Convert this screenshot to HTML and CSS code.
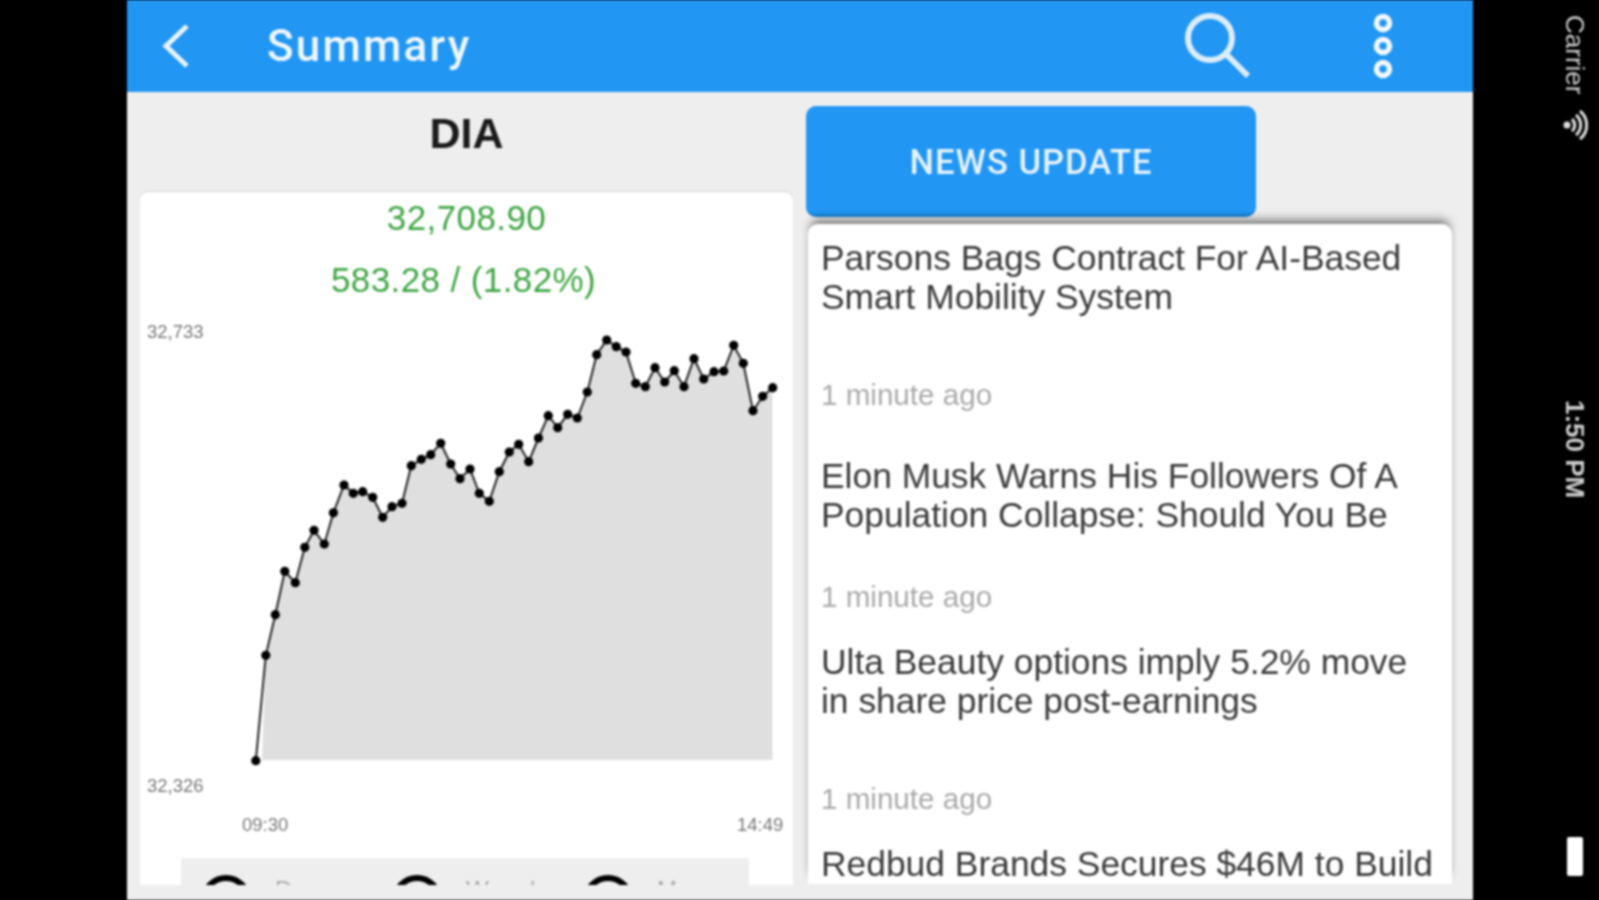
FILE: index.html
```html
<!DOCTYPE html>
<html lang="en">

<head>
  <meta charset="UTF-8" />
  <title>Summary</title>
  <meta name="viewport" content="width=device-width, initial-scale=1.0" />
  <link rel="stylesheet" href="styles.css">
</head>

<body>

  <div class="device">
    <div class="screen">

      <header class="topbar">
        <svg class="back-icon" viewBox="0 0 28 44" width="28" height="44">
          <path d="M25 2 L4 22 L25 42" fill="none" stroke="#e9f4fe" stroke-width="5" />
        </svg>
        <div class="topbar-title">Summary</div>
        <svg class="search-icon" viewBox="0 0 66 66" width="66" height="66">
          <circle cx="25" cy="25" r="22" fill="none" stroke="#dcedfc" stroke-width="6" />
          <path d="M41 41 L63 63" stroke="#dcedfc" stroke-width="6" />
        </svg>
        <svg class="more-icon" viewBox="0 0 20 66" width="20" height="66">
          <circle cx="10" cy="10" r="6.5" fill="none" stroke="#f2f8fe" stroke-width="5.5" />
          <circle cx="10" cy="33" r="6.5" fill="none" stroke="#f2f8fe" stroke-width="5.5" />
          <circle cx="10" cy="56" r="6.5" fill="none" stroke="#f2f8fe" stroke-width="5.5" />
        </svg>
      </header>

      <main class="content">

        <section class="quote-col">
          <h2 class="symbol">DIA</h2>
          <div class="quote-card">
            <p class="price">32,708.90</p>
            <p class="change">583.28 / (1.82%)</p>

            <svg class="chart" viewBox="142 320 649 538" width="649" height="538">
              <defs>
                <marker id="dot" markerUnits="userSpaceOnUse" markerWidth="10" markerHeight="10" refX="5" refY="5">
                  <circle cx="5" cy="5" r="4.6" fill="#000" />
                </marker>
              </defs>
              <polygon fill="#dfdfdf" points="262,760 265.8,655.3 275.3,614.7 284.8,571.3 295.3,582.7 304.8,547.3 314,530.3 324.3,544 333.4,512.8 344,485 353.3,493.3 362.7,491.7 372.7,497.3 382.7,517.3 392,506.7 402,503.3 411.3,465.7 421.3,459.3 430.7,454.7 440.7,443.3 450.7,464 460,478.7 470,469 479.3,493.3 489.3,501.3 499.3,471.7 509.3,452 518.7,444.3 528.7,461.7 538.5,438 548.3,415.7 557.7,427.7 567.7,414.3 577.3,418 587.3,392 596.7,354.7 606.7,340 616.3,346.7 626,352 635.7,383.3 645.3,386.7 655,367.7 664.7,382 674.3,370.7 684,386.7 694,358.7 703.7,379 714,371.7 723.7,371 733.7,345.3 743.3,363.3 753,410.7 762.7,396.3 772.5,387.7 772.5,760" />
              <polyline class="chart-line" points="255.8,760.7 265.8,655.3 275.3,614.7 284.8,571.3 295.3,582.7 304.8,547.3 314,530.3 324.3,544 333.4,512.8 344,485 353.3,493.3 362.7,491.7 372.7,497.3 382.7,517.3 392,506.7 402,503.3 411.3,465.7 421.3,459.3 430.7,454.7 440.7,443.3 450.7,464 460,478.7 470,469 479.3,493.3 489.3,501.3 499.3,471.7 509.3,452 518.7,444.3 528.7,461.7 538.5,438 548.3,415.7 557.7,427.7 567.7,414.3 577.3,418 587.3,392 596.7,354.7 606.7,340 616.3,346.7 626,352 635.7,383.3 645.3,386.7 655,367.7 664.7,382 674.3,370.7 684,386.7 694,358.7 703.7,379 714,371.7 723.7,371 733.7,345.3 743.3,363.3 753,410.7 762.7,396.3 772.7,387.7" />
              <text class="axis-label" x="147" y="338">32,733</text>
              <text class="axis-label" x="147" y="792">32,326</text>
              <text class="axis-label" x="242" y="831">09:30</text>
              <text class="axis-label" x="737" y="831">14:49</text>
            </svg>

            <div class="range-strip">
              <div class="range-option"><span class="radio"></span><span class="range-label">Day</span></div>
              <div class="range-option"><span class="radio"></span><span class="range-label">Week</span></div>
              <div class="range-option"><span class="radio"></span><span class="range-label">Mon</span></div>
            </div>
          </div>
        </section>

        <section class="news-col">
          <div class="news-btn">NEWS UPDATE</div>
          <div class="news-card">
            <article class="news-item first">
              <p class="news-title">Parsons Bags Contract For AI-Based Smart Mobility System</p>
              <p class="news-time">1 minute ago</p>
            </article>
            <article class="news-item">
              <p class="news-title">Elon Musk Warns His Followers Of A Population Collapse: Should You Be</p>
              <p class="news-time near">1 minute ago</p>
            </article>
            <article class="news-item">
              <p class="news-title">Ulta Beauty options imply 5.2% move in share price post-earnings</p>
              <p class="news-time">1 minute ago</p>
            </article>
            <article class="news-item">
              <p class="news-title">Redbud Brands Secures $46M to Build</p>
            </article>
          </div>
        </section>

      </main>
    </div>

    <aside class="statusbar">
      <div class="status-carrier">
        <span class="status-text">Carrier</span>
        <svg class="wifi-icon" viewBox="0 0 26 34" width="26" height="34">
          <circle cx="5" cy="17" r="3.5" fill="#ddd" />
          <path d="M10 11 A8 8 0 0 1 10 23 M14 7 A13 13 0 0 1 14 27 M18 3 A18 18 0 0 1 18 31" fill="none" stroke="#ddd" stroke-width="3" />
        </svg>
      </div>
      <span class="status-text status-time">1:50 PM</span>
      <div class="battery"></div>
    </aside>
  </div>

</body>

</html>
```

FILE: styles.css
```css
* {
  margin: 0;
  padding: 0;
  box-sizing: border-box;
  font-family: 'Liberation Sans', Arial, sans-serif;
}

html,
body {
  height: 100%;
  overflow: hidden;
  background: #000;
}

/* the source is a soft upscaled capture, so everything gets a little blur */
.device {
  display: flex;
  width: 1599px;
  height: 900px;
  padding-left: 127px;
  background: #000;
  filter: blur(0.8px);
}

.screen {
  width: 1346px;
  height: 900px;
  background: #eeeeee;
  overflow: hidden;
}

.topbar {
  display: flex;
  align-items: center;
  height: 92px;
  padding-left: 35px;
  background: #2196f3;
  color: #eef7fe;
}

.back-icon {
  flex: none;
}

.topbar-title {
  margin-left: 77px;
  font-size: 44px;
  font-weight: 500;
  letter-spacing: 2.2px;
  font-family: Roboto, sans-serif;
}

.search-icon {
  flex: none;
  margin-left: auto;
}

.more-icon {
  flex: none;
  margin-left: 122px;
  margin-right: 80px;
}

.content {
  display: flex;
  gap: 17px;
  padding-left: 15px;
}

.quote-col {
  width: 649px;
}

.symbol {
  height: 100px;
  padding-top: 17px;
  text-align: center;
  font-size: 43px;
  line-height: 48px;
  font-weight: 700;
  color: #1a1a1a;
}

.quote-card {
  height: 693px;
  margin: 0 -2px;
  background: #fff;
  border-radius: 8px 8px 0 0;
  overflow: hidden;
  box-shadow: 0 -1px 1px rgba(0, 0, 0, 0.12);
}

.price,
.change {
  text-align: center;
  font-size: 35px;
  line-height: 40px;
  letter-spacing: 0.4px;
  color: #3fa544;
}

.price {
  padding-top: 6px;
}

.change {
  margin-top: 22px;
  height: 42px;
  padding-right: 6px;
}

.chart {
  display: block;
  margin: 18px 0 0 2px;
}

.chart-line {
  fill: none;
  stroke: #222;
  stroke-width: 2;
  marker-start: url(#dot);
  marker-mid: url(#dot);
  marker-end: url(#dot);
}

.axis-label {
  font-size: 18.5px;
  fill: #777;
}

.range-strip {
  display: grid;
  grid-template-columns: repeat(3, 191px);
  width: 568px;
  height: 40px;
  margin-left: 41px;
  padding: 17px 0 0 20px;
  background: #eeeeee;
}

.range-option {
  display: flex;
  align-items: flex-start;
  gap: 24px;
}

.radio {
  flex: none;
  width: 50px;
  height: 50px;
  border: 6px solid #000;
  border-radius: 50%;
}

.range-label {
  margin-top: 1px;
  font-size: 24px;
  letter-spacing: 5px;
  color: #aaa;
}

.news-col {
  width: 644px;
}

.news-btn {
  display: flex;
  align-items: center;
  justify-content: center;
  width: 450px;
  height: 111px;
  margin: 14px 0 0 -2px;
  background: #2196f3;
  border-radius: 10px;
  border-bottom: 3px solid #1c84d6;
  color: #e6f3fe;
  padding-top: 3px;
  font-family: Roboto, sans-serif;
  font-size: 34.5px;
  font-weight: 500;
  letter-spacing: 1px;
}

.news-card {
  height: 660px;
  margin-top: 7px;
  padding: 15px 12px 0 13px;
  background: #fff;
  border-radius: 10px 10px 0 0;
  overflow: hidden;
  box-shadow: 0 -7px 10px -3px rgba(0, 0, 0, 0.5);
}

.news-item {
  margin-bottom: 30px;
}

.news-item.first {
  margin-bottom: 46px;
}

.news-title {
  font-size: 35.4px;
  line-height: 39px;
  color: #3a3a3a;
}

.news-time {
  margin-top: 62px;
  font-size: 29.6px;
  line-height: 32px;
  color: #aaa;
}

.news-time.near {
  margin-top: 46px;
}

.statusbar {
  display: flex;
  flex-direction: column;
  align-items: center;
  width: 126px;
  padding: 15px 0 0 78px;
}

.status-carrier {
  display: flex;
  flex-direction: column;
  align-items: center;
  gap: 14px;
}

.status-text {
  writing-mode: vertical-rl;
  font-size: 26px;
  line-height: 24px;
  color: #ccc;
}

.status-time {
  margin-top: 258px;
  font-weight: 700;
}

.battery {
  width: 16px;
  height: 39px;
  margin-top: 338px;
  background: #fff;
  border-radius: 2px;
}
```
